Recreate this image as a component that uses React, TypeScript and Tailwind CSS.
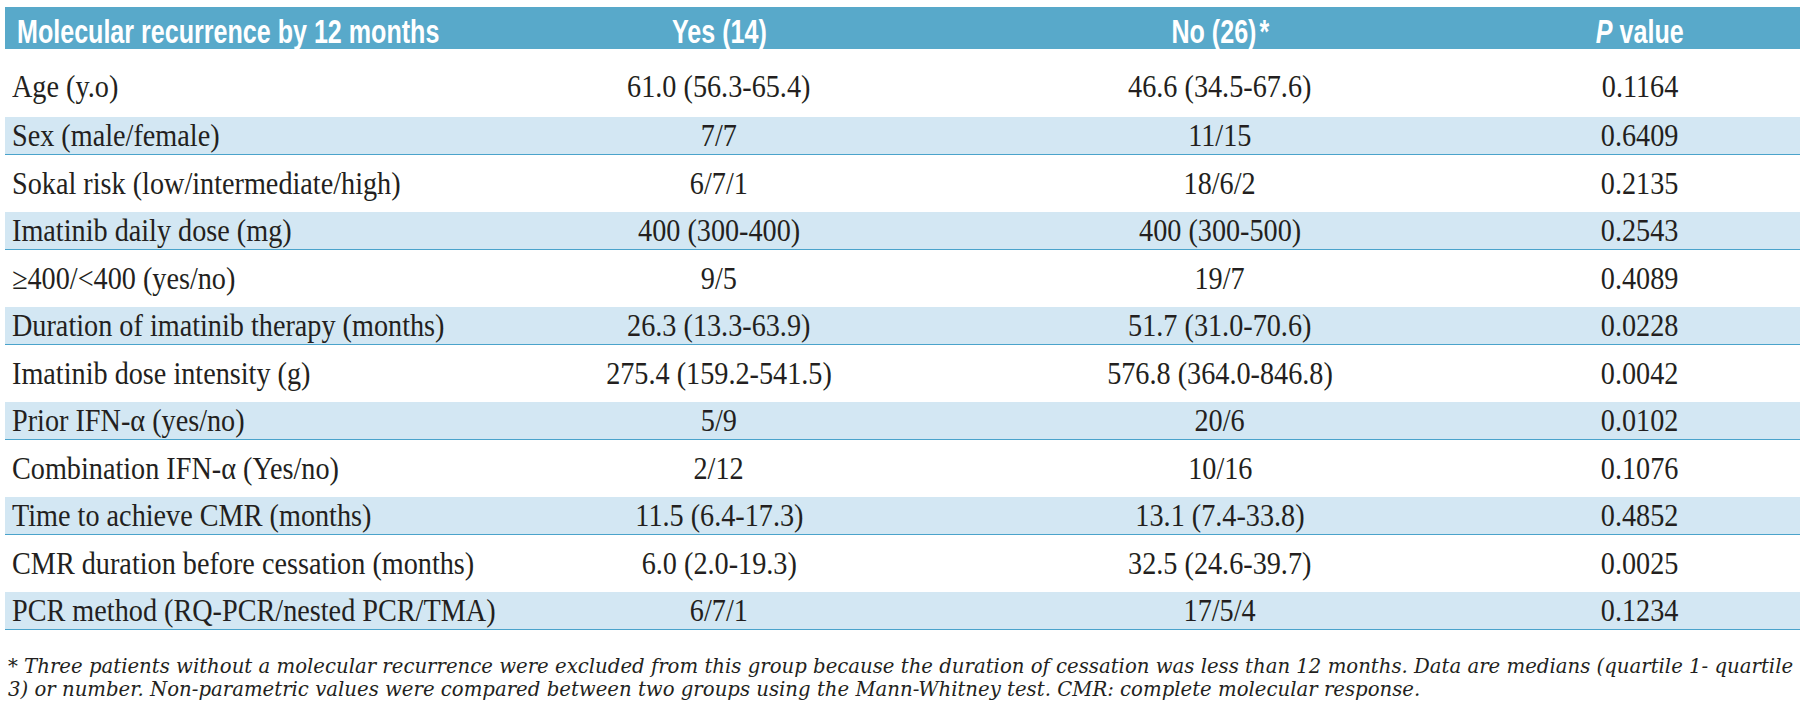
import React from "react"

const rows = [
    ["Age (y.o)", "61.0 (56.3-65.4)", "46.6 (34.5-67.6)", "0.1164"],
    ["Sex (male/female)", "7/7", "11/15", "0.6409"],
    ["Sokal risk (low/intermediate/high)", "6/7/1", "18/6/2", "0.2135"],
    ["Imatinib daily dose (mg)", "400 (300-400)", "400 (300-500)", "0.2543"],
    ["≥400/<400 (yes/no)", "9/5", "19/7", "0.4089"],
    ["Duration of imatinib therapy (months)", "26.3 (13.3-63.9)", "51.7 (31.0-70.6)", "0.0228"],
    ["Imatinib dose intensity (g)", "275.4 (159.2-541.5)", "576.8 (364.0-846.8)", "0.0042"],
    ["Prior IFN-α (yes/no)", "5/9", "20/6", "0.0102"],
    ["Combination IFN-α (Yes/no)", "2/12", "10/16", "0.1076"],
    ["Time to achieve CMR (months)", "11.5 (6.4-17.3)", "13.1 (7.4-33.8)", "0.4852"],
    ["CMR duration before cessation (months)", "6.0 (2.0-19.3)", "32.5 (24.6-39.7)", "0.0025"],
    ["PCR method (RQ-PCR/nested PCR/TMA)", "6/7/1", "17/5/4", "0.1234"],
]

const cols = "grid grid-cols-[480px_468px_534px_306px]"

// the print font is a condensed face, so squeeze a regular one
function Narrow({ children, left, amount }: { children: React.ReactNode; left?: boolean; amount: "head" | "body" }) {
    return (
        <span
            className={`inline-block whitespace-nowrap ${amount === "head" ? "scale-x-[0.76]" : "scale-x-[0.91]"} ${
                left ? "origin-left" : "origin-center"
            }`}
        >
            {children}
        </span>
    )
}

export default function App() {
    return (
        <div className="w-[1800px] h-[715px] bg-white pt-[7px] pl-[5px] text-[#231f20]">
            {/* Header */}
            <div className={`${cols} h-[42px] bg-[#58a9ca] text-white font-bold text-[33px] leading-none font-['Liberation_Sans',Arial,sans-serif]`}>
                <div className="pl-[12px] pt-[8px]"><Narrow left amount="head">Molecular recurrence by 12 months</Narrow></div>
                <div className="text-center pt-[8px]"><Narrow amount="head">Yes (14)</Narrow></div>
                <div className="text-center pt-[8px]"><Narrow amount="head">No (26)<span className="ml-[4px]">*</span></Narrow></div>
                <div className="text-center pt-[8px]"><Narrow amount="head"><i>P</i> value</Narrow></div>
            </div>

            {/* Body */}
            <div className="font-['Liberation_Serif','Times_New_Roman',serif] text-[31px] leading-none">
                {rows.map((r, i) => {
                    const striped = i % 2 === 1
                    return (
                        <div
                            key={i}
                            className={`${cols} items-center ${
                                striped
                                    ? "h-[38px] bg-[#d3e7f3] border-b border-[#4aa3cb]"
                                    : i === 0 ? "h-[68px] pt-[6px]" : "h-[57px]"
                            }`}
                        >
                            <div className="pl-[7px]"><Narrow left amount="body">{r[0]}</Narrow></div>
                            <div className="text-center"><Narrow amount="body">{r[1]}</Narrow></div>
                            <div className="text-center"><Narrow amount="body">{r[2]}</Narrow></div>
                            <div className="text-center"><Narrow amount="body">{r[3]}</Narrow></div>
                        </div>
                    )
                })}
            </div>

            {/* Footnote */}
            <div className="w-[1785px] pl-[3px] pt-[25px] italic text-[19.7px] leading-[23px] font-['DejaVu_Serif',serif] text-[#231f20]">
                <div className="text-justify [text-align-last:justify] whitespace-nowrap">
                    * Three patients without a molecular recurrence were excluded from this group because the duration of cessation was less than 12 months. Data are medians (quartile 1- quartile
                </div>
                <div>
                    3) or number. Non-parametric values were compared between two groups using the Mann-Whitney test. CMR: complete molecular response.
                </div>
            </div>
        </div>
    )
}
